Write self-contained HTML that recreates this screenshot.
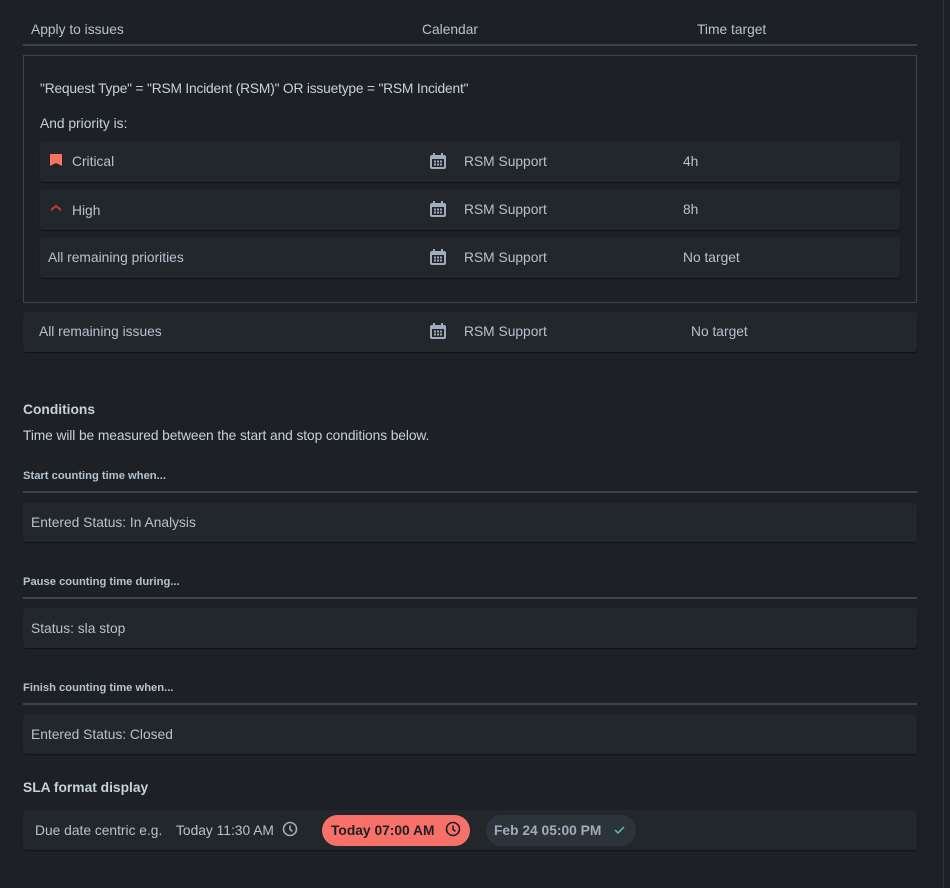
<!DOCTYPE html><html><head><style>
*{box-sizing:border-box;margin:0;padding:0}
body{width:950px;height:888px;background:#1d2125;font-family:"Liberation Sans",sans-serif;color:#b6c2cf;font-size:13.8px;position:relative;overflow:hidden}
.a{position:absolute}
.vl{left:943px;top:0;width:1px;height:888px;background:#2c333a}
.card{position:absolute;background:#22272b;border-radius:3px;box-shadow:0 1px 1px #101214}
.t{position:absolute;white-space:nowrap}
.hr{position:absolute;left:23px;width:894px;height:2px;background:#3b434b}
.cal{position:absolute;width:18px;height:18px}
.sm{font-size:11.2px;font-weight:bold;color:#b6c2cf}
.h{font-weight:bold;font-size:13.8px;color:#c7d1db}
</style></head><body>
<div class="a vl"></div>
<div class="t" style="left:31px;top:22px">Apply to issues</div>
<div class="t" style="left:422px;top:22px">Calendar</div>
<div class="t" style="left:697px;top:22px">Time target</div>
<div class="hr" style="top:44px"></div>
<div class="a" style="left:23px;top:55px;width:894px;height:248px;border:1px solid #3b434b"></div>
<div class="t" style="left:40px;top:81px;color:#c7d1db;letter-spacing:-0.2px">"Request Type" = "RSM Incident (RSM)" OR issuetype = "RSM Incident"</div>
<div class="t" style="left:40px;top:116px;color:#c7d1db">And priority is:</div>

<div class="card" style="left:40px;top:142px;width:860px;height:40px"></div>
<svg class="a" style="left:49px;top:153px" width="14" height="14"><path d="M1 1h12v12l-6-3-6 3z" fill="#f87462"/></svg>
<div class="t" style="left:72px;top:154px">Critical</div>
<div class="card" style="left:40px;top:190px;width:860px;height:40px"></div>
<svg class="a" style="left:49px;top:203px" width="14" height="10"><path d="M2 7l5-4 5 4" stroke="#c9372c" stroke-width="2" fill="none"/></svg>
<div class="t" style="left:72px;top:203px">High</div>
<div class="card" style="left:40px;top:238px;width:860px;height:40px"></div>
<div class="t" style="left:48px;top:250px">All remaining priorities</div>
<div class="card" style="left:23px;top:312px;width:894px;height:40px"></div>
<div class="t" style="left:39px;top:324px">All remaining issues</div>

<div class="t" style="left:464px;top:154px">RSM Support</div><div class="t" style="left:683px;top:154px">4h</div>
<div class="t" style="left:464px;top:202px">RSM Support</div><div class="t" style="left:683px;top:202px">8h</div>
<div class="t" style="left:464px;top:250px">RSM Support</div><div class="t" style="left:683px;top:250px">No target</div>
<div class="t" style="left:464px;top:324px">RSM Support</div><div class="t" style="left:691px;top:324px">No target</div>

<svg width="0" height="0" style="position:absolute"><defs><g id="c"><rect x="1" y="3" width="16" height="14" rx="2" fill="#9fadbc"/><rect x="3" y="7" width="12" height="8" fill="#22272b"/><rect x="4" y="1" width="2" height="3" fill="#9fadbc"/><rect x="12" y="1" width="2" height="3" fill="#9fadbc"/><g fill="#9fadbc"><rect x="5" y="8.5" width="2" height="2"/><rect x="8" y="8.5" width="2" height="2"/><rect x="11" y="8.5" width="2" height="2"/><rect x="5" y="11.5" width="2" height="2"/><rect x="8" y="11.5" width="2" height="2"/><rect x="11" y="11.5" width="2" height="2"/></g></g></defs></svg>
<svg class="cal" style="left:429px;top:152px"><use href="#c"/></svg>
<svg class="cal" style="left:429px;top:200px"><use href="#c"/></svg>
<svg class="cal" style="left:429px;top:248px"><use href="#c"/></svg>
<svg class="cal" style="left:429px;top:322px"><use href="#c"/></svg>

<div class="t h" style="left:23px;top:402px">Conditions</div>
<div class="t" style="left:23px;top:428px;color:#c7d1db;letter-spacing:-0.1px">Time will be measured between the start and stop conditions below.</div>
<div class="t sm" style="left:23px;top:470px">Start counting time when...</div>
<div class="hr" style="top:491px"></div>
<div class="card" style="left:23px;top:503px;width:894px;height:39px"></div>
<div class="t" style="left:31px;top:515px">Entered Status: In Analysis</div>
<div class="t sm" style="left:23px;top:576px">Pause counting time during...</div>
<div class="hr" style="top:597px"></div>
<div class="card" style="left:23px;top:608px;width:894px;height:40px"></div>
<div class="t" style="left:31px;top:621px">Status: sla stop</div>
<div class="t sm" style="left:23px;top:682px">Finish counting time when...</div>
<div class="hr" style="top:703px"></div>
<div class="card" style="left:23px;top:714px;width:894px;height:40px"></div>
<div class="t" style="left:31px;top:727px">Entered Status: Closed</div>

<div class="t h" style="left:23px;top:780px">SLA format display</div>
<div class="card" style="left:23px;top:810px;width:894px;height:40px"></div>
<div class="t" style="left:35px;top:823px">Due date centric e.g.</div>
<div class="t" style="left:176px;top:823px">Today 11:30 AM</div>
<svg class="a" style="left:282px;top:821px" width="16" height="16"><circle cx="8" cy="8" r="6.5" stroke="#9fadbc" stroke-width="1.6" fill="none"/><path d="M8 4.5V8.5l2.5 1.8" stroke="#9fadbc" stroke-width="1.6" fill="none"/></svg>
<div class="a" style="left:322px;top:815px;width:148px;height:31px;border-radius:16px;background:#f87168"></div>
<div class="t" style="left:331px;top:823px;font-weight:bold;color:#1d2125">Today 07:00 AM</div>
<svg class="a" style="left:445px;top:821px" width="16" height="16"><circle cx="8" cy="8" r="6.5" stroke="#1d2125" stroke-width="1.6" fill="none"/><path d="M8 4.5V8.5l2.5 1.8" stroke="#1d2125" stroke-width="1.6" fill="none"/></svg>
<div class="a" style="left:486px;top:815px;width:150px;height:31px;border-radius:16px;background:#2c333a"></div>
<div class="t" style="left:494px;top:823px;font-weight:bold;color:#9fadbc">Feb 24 05:00 PM</div>
<svg class="a" style="left:614px;top:825px" width="12" height="10"><path d="M1 5l3 3 6-6" stroke="#4bce97" stroke-width="1.5" fill="none"/></svg>
</body></html>
